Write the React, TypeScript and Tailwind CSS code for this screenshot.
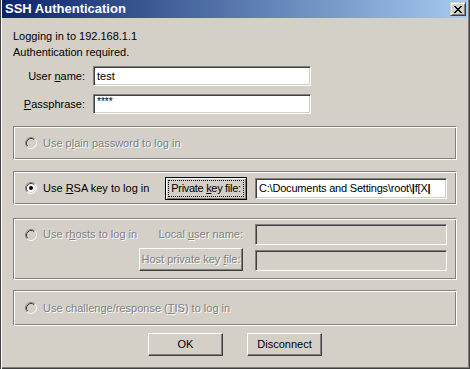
import type { ReactNode } from "react";

const sunken =
  "border border-t-[#808080] border-l-[#808080] border-b-white border-r-white shadow-[inset_1px_1px_0_#404040,inset_-1px_-1px_0_#d4d0c8]";
const raised =
  "border border-t-white border-l-white border-b-[#404040] border-r-[#404040] shadow-[inset_-1px_-1px_0_#808080]";
const etched =
  "border border-t-[#808080] border-l-[#808080] border-b-white border-r-white shadow-[inset_1px_1px_0_#fff,inset_-1px_-1px_0_#808080]";
const greyed = "text-[#808080] [text-shadow:1px_1px_0_#fff]";

const closeGlyph = ["XX....XX", ".XX..XX.", "..XXXX..", "...XX...", "..XXXX..", ".XX..XX.", "XX....XX"];

function CloseIcon() {
  return (
    <svg width="8" height="7" viewBox="0 0 8 7" shapeRendering="crispEdges">
      {closeGlyph.map((row, y) =>
        row.split("").map((c, x) => (c === "X" ? <rect key={`${x}-${y}`} x={x} y={y} width="1" height="1" fill="#000" /> : null))
      )}
    </svg>
  );
}

function Radio({ checked, disabled }: { checked?: boolean; disabled?: boolean }) {
  return (
    <svg width="12" height="12" viewBox="0 0 12 12" className="shrink-0">
      <circle cx="6" cy="6" r="5" fill={disabled ? "#d4d0c8" : "#fff"} />
      <path d="M2.11 9.89 A5.5 5.5 0 0 1 9.89 2.11" stroke="#808080" strokeWidth="1" fill="none" />
      <path d="M9.89 2.11 A5.5 5.5 0 0 1 2.11 9.89" stroke="#fff" strokeWidth="1" fill="none" />
      <path d="M2.82 9.18 A4.5 4.5 0 0 1 9.18 2.82" stroke="#404040" strokeWidth="1" fill="none" />
      <path d="M9.18 2.82 A4.5 4.5 0 0 1 2.82 9.18" stroke="#d4d0c8" strokeWidth="1" fill="none" />
      {checked && <circle cx="6" cy="6" r="2" fill="#000" />}
    </svg>
  );
}

function Option({ children, checked, disabled }: { children: ReactNode; checked?: boolean; disabled?: boolean }) {
  return (
    <div className="flex items-center gap-[6px]">
      <Radio checked={checked} disabled={disabled} />
      <span className={disabled ? greyed : ""}>{children}</span>
    </div>
  );
}

function Field({ value, disabled, className = "" }: { value?: ReactNode; disabled?: boolean; className?: string }) {
  return (
    <div
      className={`${sunken} ${disabled ? "bg-[#d4d0c8]" : "bg-white"} flex items-center pl-[3px] overflow-hidden whitespace-nowrap ${className}`}
    >
      {value}
    </div>
  );
}

function Button({ children, disabled, className = "" }: { children: ReactNode; disabled?: boolean; className?: string }) {
  return (
    <div className={`${raised} h-[23px] flex items-center justify-center whitespace-nowrap ${disabled ? greyed : ""} ${className}`}>
      <span>{children}</span>
    </div>
  );
}

export default function App() {
  return (
    <div className="w-[470px] h-[369px] bg-[#d4d0c8] flex flex-col font-['Liberation_Sans',Arial,sans-serif] text-[11px] text-black overflow-hidden shadow-[inset_1px_0_0_#404040,inset_2px_0_0_#fff,inset_-1px_-1px_0_#404040,inset_-2px_-2px_0_#808080]">
      <div className="ml-[2px] mr-[3px] h-[18px] shrink-0 flex items-center pl-[3px] pr-[1px] bg-[linear-gradient(to_right,#0a246a,#a6caf0)]">
        <span className="text-white font-bold text-[13px] flex-1">SSH Authentication</span>
        <div className="w-[16px] h-[14px] flex items-center justify-center border border-t-[#d4d0c8] border-l-[#d4d0c8] border-b-[#404040] border-r-[#404040] shadow-[inset_1px_1px_0_#fff,inset_-1px_-1px_0_#808080] bg-[#d4d0c8]">
          <CloseIcon />
        </div>
      </div>

      <div className="pl-[13px] flex flex-col">
        <div className="mt-[10px] leading-[16px]">
          <div>Logging in to 192.168.1.1</div>
          <div>Authentication required.</div>
        </div>

        <div className="mt-[6px] flex items-center h-[20px]">
          <span className="w-[72px] text-right">
            User <u>n</u>ame:
          </span>
          <Field value="test" className="ml-[8px] w-[218px] h-[20px]" />
        </div>
        <div className="mt-[8px] flex items-center h-[20px]">
          <span className="w-[72px] text-right">
            <u>P</u>assphrase:
          </span>
          <Field value={<span className="text-[10px] leading-none -mt-[4px]">****</span>} className="ml-[8px] w-[218px] h-[20px]" />
        </div>

        <div className={`${etched} mt-[12px] w-[444px] h-[34px] flex items-center pl-[11px]`}>
          <Option disabled>
            Use p<u>l</u>ain password to log in
          </Option>
        </div>

        <div className={`${etched} mt-[11px] w-[444px] h-[34px] flex items-center pl-[11px]`}>
          <div className="w-[140px]">
            <Option checked>
              Use <u>R</u>SA key to log in
            </Option>
          </div>
          <div className="w-[82px] h-[23px] flex p-[2px] border border-black shadow-[inset_1px_1px_0_#fff,inset_-1px_-1px_0_#808080]">
            <div className="flex-1 flex items-center justify-center border border-dotted border-black whitespace-nowrap overflow-visible">
              <span className="tracking-[-0.3px]">
                Private <u>k</u>ey file:
              </span>
            </div>
          </div>
          <Field
            className="ml-[8px] w-[192px] h-[21px]"
            value={
              <span className="tracking-[-0.2px]">
                {"C:\\Documents and Settings\\root\\"}
                <b>|</b>f[X<b>|</b>
              </span>
            }
          />
        </div>

        <div className={`${etched} mt-[13px] w-[444px] h-[62px] flex flex-col pl-[11px] pr-[9px] pt-[5px]`}>
          <div className="flex items-center h-[21px]">
            <div className="flex-1">
              <Option disabled>
                Use r<u>h</u>osts to log in
              </Option>
            </div>
            <span className={greyed}>
              Local <u>u</u>ser name:
            </span>
            <Field disabled className="ml-[12px] w-[192px] h-[21px]" />
          </div>
          <div className="mt-[3px] flex items-end justify-end">
            <Button disabled className="w-[104px]">
              Host private key <u>f</u>ile:
            </Button>
            <Field disabled className="ml-[12px] w-[192px] h-[21px]" />
          </div>
        </div>

        <div className={`${etched} mt-[10px] w-[444px] h-[36px] flex items-center pl-[11px]`}>
          <Option disabled>
            Use challenge/response (<u>T</u>IS) to log in
          </Option>
        </div>

        <div className="mt-[7px] w-[444px] flex justify-center gap-[24px]">
          <Button className="w-[75px]">OK</Button>
          <Button className="w-[75px]">Disconnect</Button>
        </div>
      </div>
    </div>
  );
}
